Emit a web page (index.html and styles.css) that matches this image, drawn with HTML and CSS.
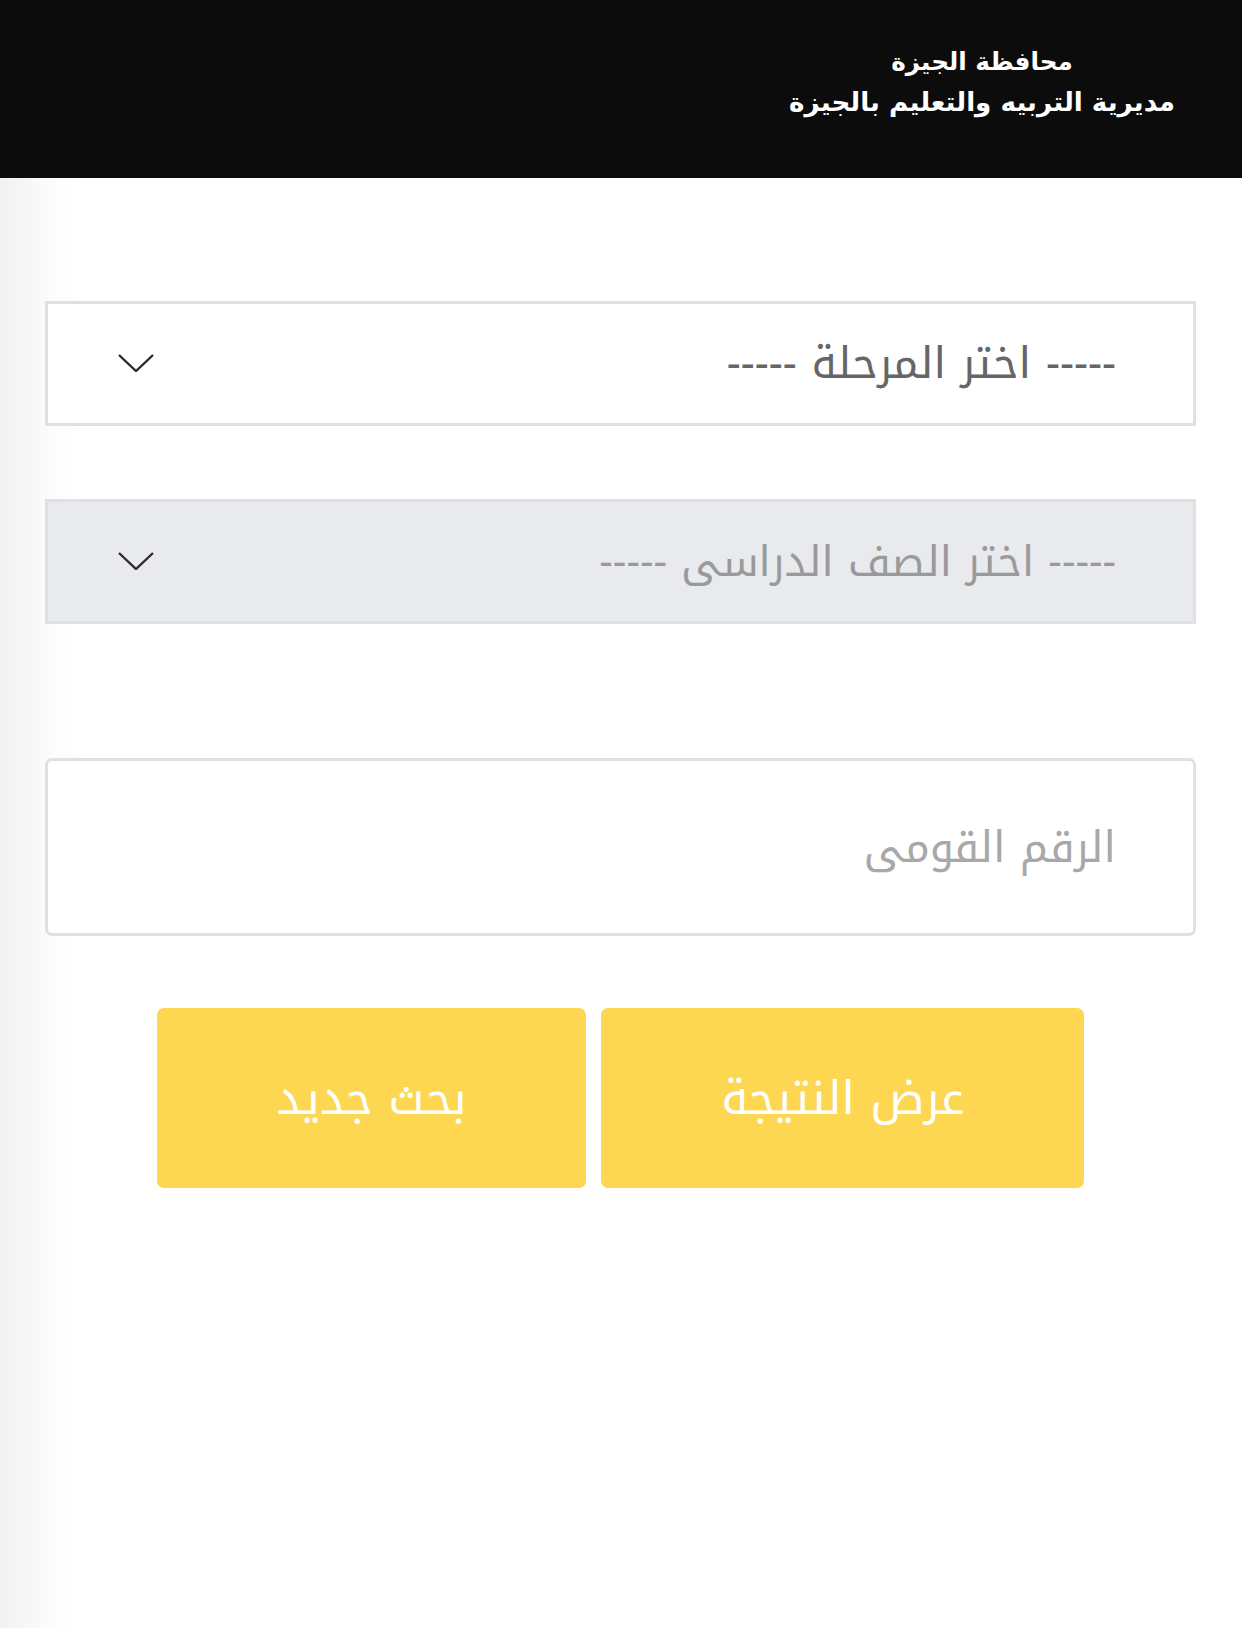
FILE: index.html
```html
<!DOCTYPE html>
<html lang="ar" dir="rtl">
<head>
    <meta charset="utf-8">
    <title>نتيجة الطلاب - مديرية التربيه والتعليم بالجيزة</title>
    <link rel="stylesheet" href="styles.css">
</head>
<body>
    <div class="header">
        <div class="brand">
            <div class="brand-top">محافظة الجيزة</div>
            <div class="brand-sub">مديرية التربيه والتعليم بالجيزة</div>
        </div>
    </div>

    <form class="search-form">
        <div class="select-wrap">
            <select class="field-select">
                <option>----- اختر المرحلة -----</option>
            </select>
            <svg class="chevron" width="36" height="18" viewBox="0 0 36 18">
                <path d="M1 1 L18 17 L35 1" fill="none" stroke="#2b2b2b" stroke-width="2.4"/>
            </svg>
        </div>

        <div class="select-wrap">
            <select class="field-select grade" disabled>
                <option>----- اختر الصف الدراسى -----</option>
            </select>
            <svg class="chevron" width="36" height="18" viewBox="0 0 36 18">
                <path d="M1 1 L18 17 L35 1" fill="none" stroke="#2b2b2b" stroke-width="2.4"/>
            </svg>
        </div>

        <input class="field-input" type="text" placeholder="الرقم القومى">

        <div class="actions">
            <button type="button" class="btn">عرض النتيجة</button>
            <button type="reset" class="btn">بحث جديد</button>
        </div>
    </form>
</body>
</html>
```

FILE: styles.css
```css
body {
    margin: 0;
    min-height: 100vh;
    font-family: "Noto Kufi Arabic", "Noto Sans Arabic", "DejaVu Sans", sans-serif;
    background: linear-gradient(to right, #f1f1f1 0, #fdfdfd 55px, #fff 80px);
}

.header {
    height: 178px;
    background: #0c0c0c;
    display: flex;
    justify-content: flex-start;
    padding-right: 67px;
}

.brand {
    text-align: center;
    color: #fff;
    font-family: "DejaVu Sans", sans-serif;
    font-weight: bold;
    padding-top: 41px;
}

.brand-top {
    font-size: 24.7px;
    line-height: 42px;
}

.brand-sub {
    font-size: 26.2px;
    line-height: 38px;
}

.search-form {
    padding: 123px 46px 0 45px;
}

.select-wrap {
    position: relative;
    margin-bottom: 73px;
}

.select-wrap + .select-wrap {
    margin-bottom: 134px;
}

.field-select {
    display: block;
    width: 100%;
    height: 125px;
    appearance: none;
    -webkit-appearance: none;
    border: 3px solid #dfe0e2;
    border-radius: 0;
    background: #fff;
    padding: 0 77px 0 0;
    font-family: inherit;
    font-size: 43.5px;
    color: #666;
}

.field-select.grade {
    font-size: 42px;
}

.field-select:disabled {
    background: #e8eaed;
    color: #9a9a9a;
    opacity: 1;
}

.chevron {
    position: absolute;
    left: 73px;
    top: 53px;
    pointer-events: none;
}

.field-input {
    display: block;
    width: 100%;
    box-sizing: border-box;
    height: 178px;
    border: 3px solid #dfe0e2;
    border-radius: 7px;
    padding: 0 77px 0 20px;
    font-family: inherit;
    font-size: 43px;
    color: #444;
    background: #fff;
}

.field-input::placeholder {
    color: #a8a8a8;
}

.actions {
    display: flex;
    justify-content: center;
    gap: 15px;
    margin-top: 72px;
}

.btn {
    height: 180px;
    padding: 0 120px;
    border: 0;
    border-radius: 7px;
    background: #fdd752;
    color: #fff;
    font-family: inherit;
    font-size: 46px;
}
```
